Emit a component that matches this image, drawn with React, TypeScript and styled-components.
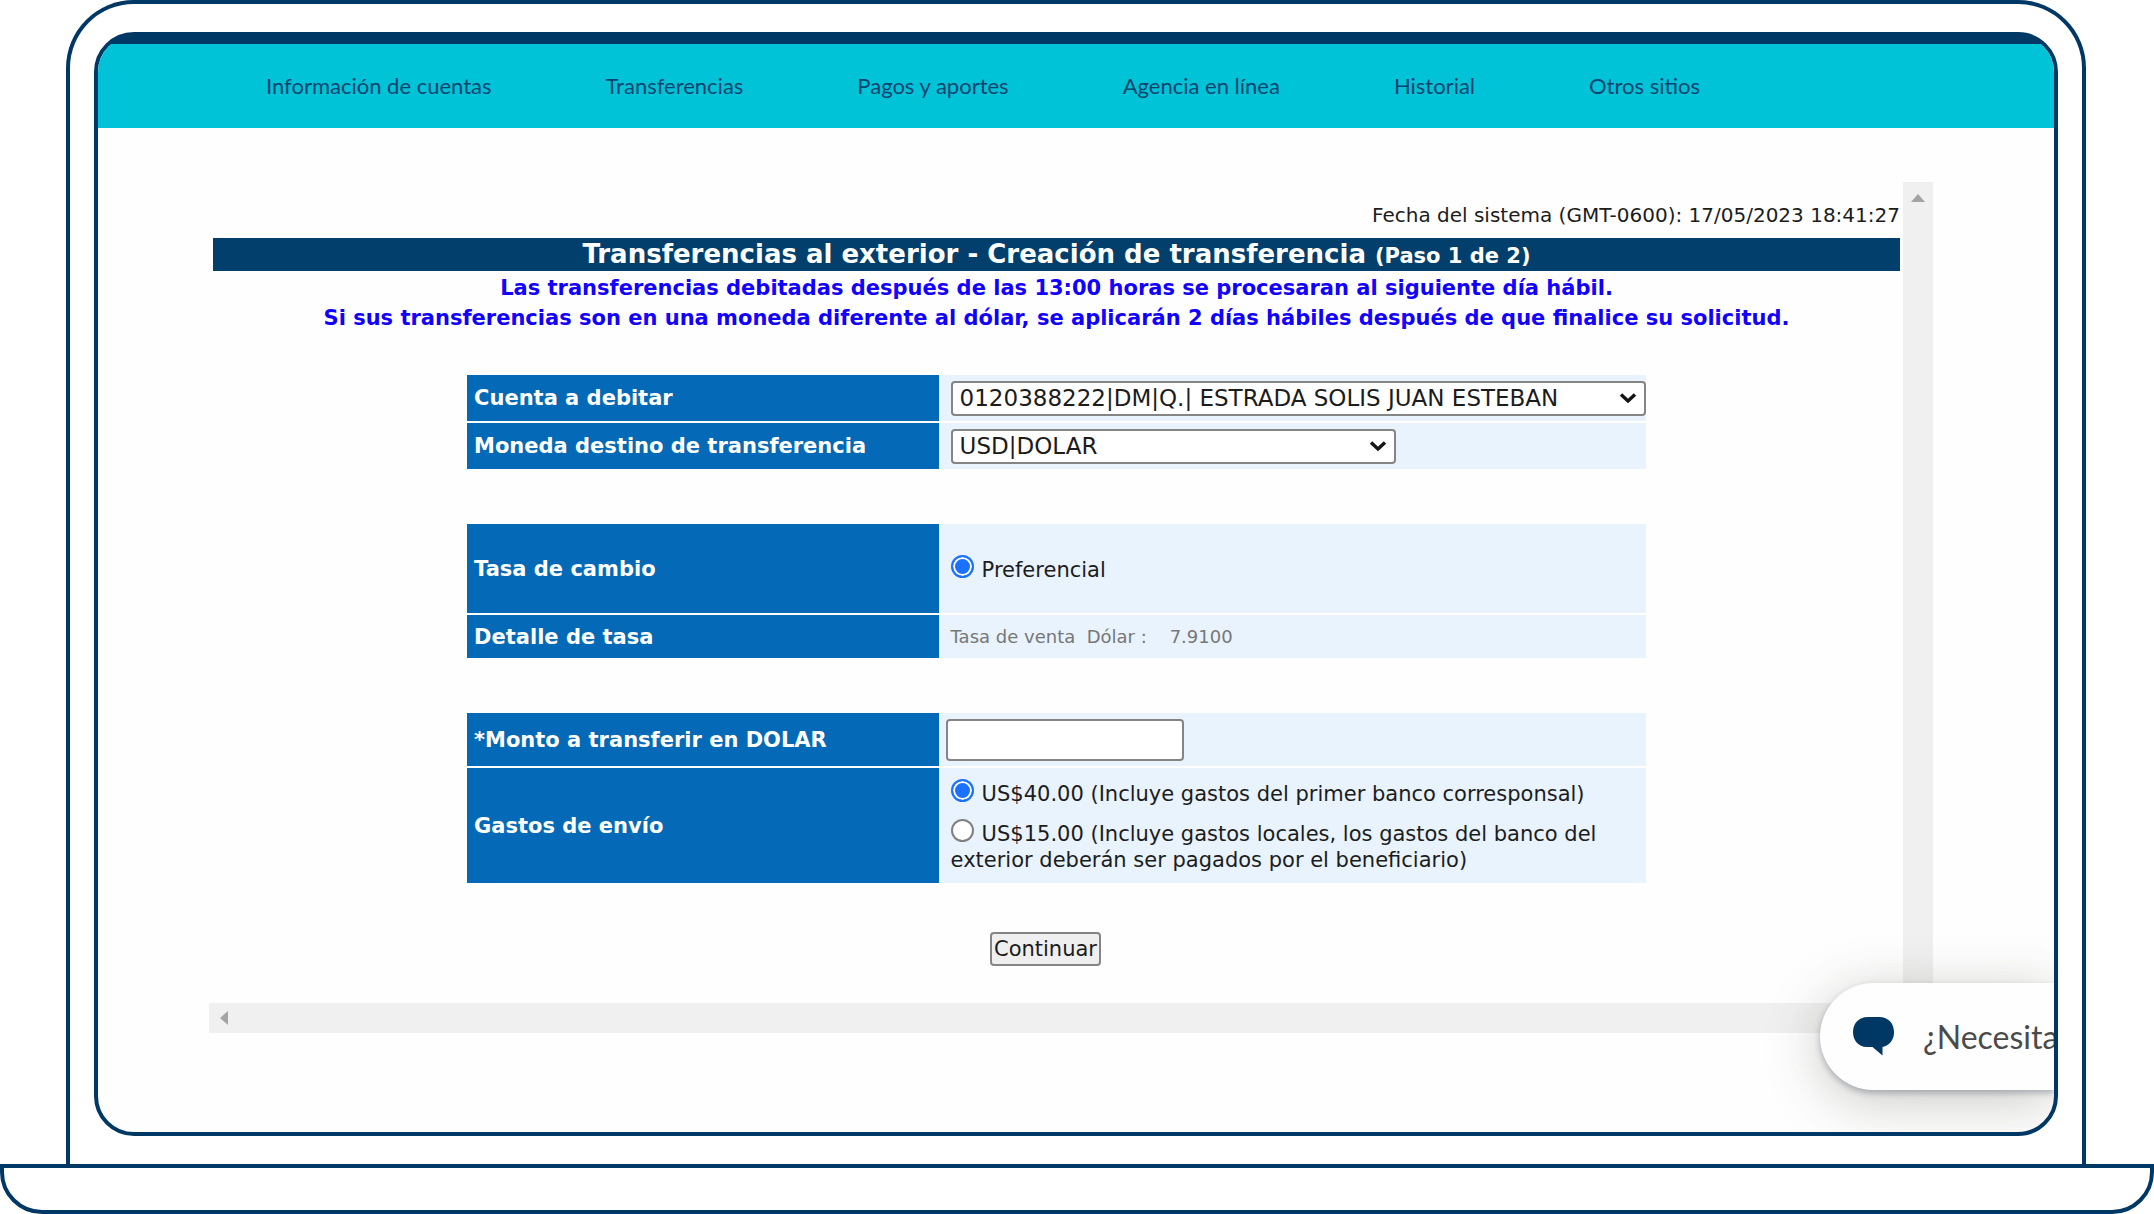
import React from "react";
import styled, { createGlobalStyle } from "styled-components";

const navy = "#003865";

const GlobalStyle = createGlobalStyle`
  *, *::before, *::after { box-sizing: border-box; }
  body {
    margin: 0;
    background: #fff;
    color: #1c1c1c;
    font-family: "DejaVu Sans", Verdana, sans-serif;
    font-size: 21px;
  }
`;

const Laptop = styled.div`
  display: flex;
  flex-direction: column;
`;

const Lid = styled.div`
  margin: 0 68px 0 66px;
  padding: 28px 24px;
  border: 4px solid ${navy};
  border-bottom: 0;
  border-radius: 68px 68px 0 0;
`;

const Base = styled.div`
  height: 50px;
  border: 4px solid ${navy};
  border-radius: 0 0 42px 42px;
`;

const Screen = styled.div`
  position: relative;
  overflow: hidden;
  border: 4px solid ${navy};
  border-radius: 40px;
  background: linear-gradient(${navy} 0 12px, #fefefe 12px) border-box;
`;

const Nav = styled.nav`
  display: flex;
  align-items: center;
  gap: 114px;
  min-height: 84px;
  margin-top: 8px;
  padding-left: 168px;
  background: #00c3d7;
`;

const NavLink = styled.a`
  color: #0a446f;
  font-family: Lato, sans-serif;
  font-size: 22px;
  line-height: 28px;
  text-decoration: none;
  white-space: nowrap;
`;

const Viewer = styled.main`
  display: grid;
  grid-template-columns: 1fr 30px;
  grid-template-rows: auto 30px;
  margin: 54px 121px 99px 111px;
`;

const Content = styled.div`
  padding: 20px 3px 37px 4px;
`;

const Track = styled.div<{ $vertical?: boolean }>`
  display: flex;
  flex-direction: ${(p) => (p.$vertical ? "column" : "row")};
  align-items: center;
  padding: ${(p) => (p.$vertical ? "12px 0" : "0 11px")};
  background: #f0f0f0;
`;

const SystemDate = styled.div`
  margin-bottom: 10px;
  font-size: 20px;
  line-height: 26px;
  text-align: right;
`;

const Banner = styled.h1`
  height: 33px;
  margin: 0 0 2px;
  background: #023f6c;
  color: #fff;
  font-size: 26px;
  font-weight: 700;
  line-height: 33px;
  text-align: center;
`;

const Step = styled.span`
  font-size: 21px;
`;

const Notice = styled.p`
  margin: 0;
  color: #1200ff;
  font-weight: 700;
  line-height: 30px;
  text-align: center;
`;

const Form = styled.form`
  display: flex;
  flex-direction: column;
  align-items: center;
  gap: 55px;
  margin-top: 42px;
`;

const Group = styled.div`
  display: flex;
  flex-direction: column;
  gap: 2px;
  width: 70%;
  padding: 0 1px;
`;

const Row = styled.div<{ $height: number }>`
  display: grid;
  grid-template-columns: 40% 60%;
  min-height: ${(p) => p.$height}px;
`;

const labelCell = `
  display: flex;
  align-items: center;
  padding: 0 7px;
  background: #046ab7;
  color: #fff;
  font-weight: 700;
  line-height: 26px;
`;

const FieldLabel = styled.label`
  ${labelCell}
`;

const RowTitle = styled.div`
  ${labelCell}
`;

const Cell = styled.div<{ $inset?: number }>`
  display: flex;
  flex-direction: column;
  justify-content: center;
  align-items: flex-start;
  padding-left: ${(p) => p.$inset ?? 12}px;
  background: #e8f3fd;
`;

const SelectBox = styled.div<{ $width: string }>`
  display: grid;
  align-items: center;
  width: ${(p) => p.$width};

  > * { grid-area: 1 / 1; }
  > svg { justify-self: end; margin-right: 9px; pointer-events: none; }
`;

const Select = styled.select`
  width: 100%;
  height: 35px;
  padding: 0 7px;
  appearance: none;
  border: 2px solid #858585;
  border-radius: 4px;
  background: #fff;
  color: #1c1c1c;
  font-family: inherit;
  font-size: 23px;
`;

const AmountInput = styled.input`
  width: 238px;
  height: 42px;
  border: 2px solid #858585;
  border-radius: 4px;
  background: #fff;
  font: inherit;
`;

const Option = styled.label`
  line-height: 26px;

  & + & { margin-top: 12px; }
`;

const Radio = styled.input`
  width: 23px;
  height: 23px;
  margin: 0 8px 0 0;
  appearance: none;
  border: 2px solid #808080;
  border-radius: 50%;
  background: #fff;
  vertical-align: -1px;

  &:checked {
    border-color: #1a70ff;
    background: #1a70ff;
    box-shadow: inset 0 0 0 2px #fff;
  }
`;

const Detail = styled.div`
  color: #777;
  font-size: 18px;
  line-height: 24px;
  white-space: pre;
`;

const Submit = styled.button`
  height: 34px;
  margin: -6px 22px 0 0;
  padding: 0 2px;
  border: 2px solid #858585;
  border-radius: 4px;
  background: #efefef;
  color: #1c1c1c;
  font-family: inherit;
  font-size: 21px;
`;

const Chat = styled.button`
  position: absolute;
  right: 0;
  bottom: 42px;
  display: flex;
  align-items: center;
  gap: 29px;
  width: 234px;
  height: 107px;
  padding: 0 0 0 33px;
  border: 0;
  border-radius: 54px 0 0 54px;
  background: #fefefe;
  box-shadow: 0 3px 6px rgba(20, 30, 50, 0.28), 0 10px 56px rgba(60, 60, 50, 0.28);
  color: #4a4a4a;
  font-family: Lato, sans-serif;
  font-size: 32px;
  white-space: nowrap;

  > svg { flex: none; }
`;

const links = [
  "Información de cuentas",
  "Transferencias",
  "Pagos y aportes",
  "Agencia en línea",
  "Historial",
  "Otros sitios",
];

const Chevron = () => (
  <svg width="18" height="12" viewBox="0 0 18 12" fill="none" aria-hidden="true">
    <path d="M2 2.5 L9 9 L16 2.5" stroke="#151515" strokeWidth="3.4" />
  </svg>
);

const Dropdown = ({ id, width, value }: { id: string; width: string; value: string }) => (
  <SelectBox $width={width}>
    <Select id={id}>
      <option>{value}</option>
    </Select>
    <Chevron />
  </SelectBox>
);

export default function App() {
  return (
    <>
      <GlobalStyle />
      <Laptop>
        <Lid>
          <Screen>
            <Nav>
              {links.map((text) => (
                <NavLink href="#" key={text}>{text}</NavLink>
              ))}
            </Nav>
            <Viewer>
              <Content>
                <SystemDate>Fecha del sistema (GMT-0600): 17/05/2023 18:41:27</SystemDate>
                <Banner>
                  Transferencias al exterior - Creación de transferencia <Step>(Paso 1 de 2)</Step>
                </Banner>
                <Notice>Las transferencias debitadas después de las 13:00 horas se procesaran al siguiente día hábil.</Notice>
                <Notice>Si sus transferencias son en una moneda diferente al dólar, se aplicarán 2 días hábiles después de que finalice su solicitud.</Notice>
                <Form onSubmit={(e) => e.preventDefault()}>
                  <Group>
                    <Row $height={46}>
                      <FieldLabel htmlFor="cuenta">Cuenta a debitar</FieldLabel>
                      <Cell>
                        <Dropdown id="cuenta" width="100%" value="0120388222|DM|Q.| ESTRADA SOLIS JUAN ESTEBAN" />
                      </Cell>
                    </Row>
                    <Row $height={46}>
                      <FieldLabel htmlFor="moneda">Moneda destino de transferencia</FieldLabel>
                      <Cell>
                        <Dropdown id="moneda" width="64%" value="USD|DOLAR" />
                      </Cell>
                    </Row>
                  </Group>
                  <Group>
                    <Row $height={89}>
                      <RowTitle>Tasa de cambio</RowTitle>
                      <Cell>
                        <Option><Radio type="radio" name="tasa" defaultChecked />Preferencial</Option>
                      </Cell>
                    </Row>
                    <Row $height={43}>
                      <RowTitle>Detalle de tasa</RowTitle>
                      <Cell>
                        <Detail>{"Tasa de venta  Dólar :    7.9100"}</Detail>
                      </Cell>
                    </Row>
                  </Group>
                  <Group>
                    <Row $height={53}>
                      <FieldLabel htmlFor="monto">*Monto a transferir en DOLAR</FieldLabel>
                      <Cell $inset={7}>
                        <AmountInput id="monto" type="text" />
                      </Cell>
                    </Row>
                    <Row $height={115}>
                      <RowTitle>Gastos de envío</RowTitle>
                      <Cell>
                        <Option><Radio type="radio" name="gastos" defaultChecked />US$40.00 (Incluye gastos del primer banco corresponsal)</Option>
                        <Option><Radio type="radio" name="gastos" />US$15.00 (Incluye gastos locales, los gastos del banco del exterior deberán ser pagados por el beneficiario)</Option>
                      </Cell>
                    </Row>
                  </Group>
                  <Submit type="submit">Continuar</Submit>
                </Form>
              </Content>
              <Track $vertical>
                <svg width="14" height="8" viewBox="0 0 14 8" aria-hidden="true">
                  <path d="M7 0 L14 8 H0 Z" fill="#a3a3a3" />
                </svg>
              </Track>
              <Track>
                <svg width="8" height="14" viewBox="0 0 8 14" aria-hidden="true">
                  <path d="M0 7 L8 0 V14 Z" fill="#a3a3a3" />
                </svg>
              </Track>
            </Viewer>
            <Chat type="button">
              <svg width="41" height="39" viewBox="0 0 41 39" aria-hidden="true">
                <path
                  d="M15 0 H26 C36 0 41 7 41 15.500 C41 22 37 28.500 29.500 30 V38.500 L19.500 30 H14 C5 30 0 23 0 15 C0 7 5 0 15 0 Z"
                  fill={navy}
                />
              </svg>
              ¿Necesita
            </Chat>
          </Screen>
        </Lid>
        <Base />
      </Laptop>
    </>
  );
}
